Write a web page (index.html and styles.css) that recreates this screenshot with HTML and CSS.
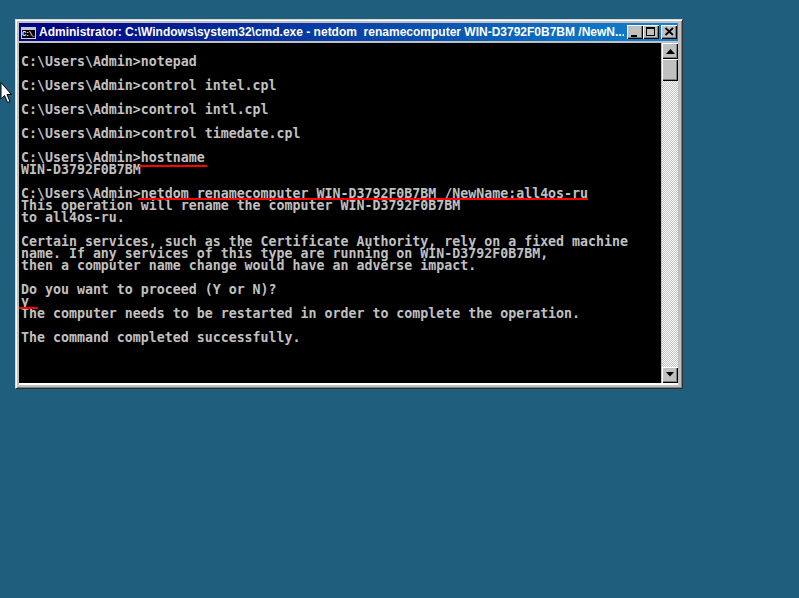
FILE: index.html
```html
<!DOCTYPE html>
<html lang="en">
<head>
<meta charset="utf-8">
<title>cmd.exe</title>
<link rel="stylesheet" href="styles.css">
</head>
<body>
<main class="desktop">
  <svg class="cursor" width="12" height="21" viewBox="0 0 12 21"><path d="M1 0.5V17L4.5 13.5L7.5 20.5L10 19.500L7 12.500H11.500Z" fill="#fff" stroke="#000"/></svg>
  <section class="window">
    <header class="titlebar">
      <div class="appicon"><span class="appicon-text">C:\_</span></div>
      <div class="title">Administrator: C:\Windows\system32\cmd.exe - netdom&nbsp; renamecomputer WIN-D3792F0B7BM /NewN...</div>
      <div class="controls">
        <button class="ctl"><svg width="16" height="14" viewBox="0 0 16 14"><rect x="4" y="10" width="6" height="2" fill="#000"/></svg></button>
        <button class="ctl"><svg width="16" height="14" viewBox="0 0 16 14"><path d="M3 2H12V11H3Z M4 4V10H11V4Z" fill="#000" fill-rule="evenodd"/></svg></button>
        <button class="ctl ctl-close"><svg width="16" height="14" viewBox="0 0 16 14"><path d="M4.500 3L12 10M12 3L4.500 10" stroke="#000" stroke-width="1.800"/></svg></button>
      </div>
    </header>
    <div class="client">
      <div class="console">
<pre class="output">

C:\Users\Admin&gt;notepad

C:\Users\Admin&gt;control intel.cpl

C:\Users\Admin&gt;control intl.cpl

C:\Users\Admin&gt;control timedate.cpl

C:\Users\Admin&gt;hostname
WIN-D3792F0B7BM

C:\Users\Admin&gt;netdom renamecomputer WIN-D3792F0B7BM /NewName:all4os-ru
This operation will rename the computer WIN-D3792F0B7BM
to all4os-ru.

Certain services, such as the Certificate Authority, rely on a fixed machine
name. If any services of this type are running on WIN-D3792F0B7BM,
then a computer name change would have an adverse impact.

Do you want to proceed (Y or N)?
y
The computer needs to be restarted in order to complete the operation.

The command completed successfully.
</pre>
        <div class="mark mark-host"></div>
        <div class="mark mark-netdom"></div>
        <div class="mark mark-y"></div>
      </div>
      <aside class="scrollbar">
        <div class="sbtn"><svg width="16" height="16" viewBox="0 0 16 16"><path d="M8.500 6L13 11H4Z" fill="#000"/></svg></div>
        <div class="thumb"></div>
        <div class="track"></div>
        <div class="sbtn"><svg width="16" height="16" viewBox="0 0 16 16"><path d="M4 5H12L8 9.500Z" fill="#000"/></svg></div>
      </aside>
    </div>
  </section>
</main>
</body>
</html>
```
FILE: styles.css
```css
* { box-sizing: border-box; }
html, body { margin: 0; height: 100%; }
body { background: #1f5f7d; overflow: hidden; }
.desktop { position: relative; width: 799px; height: 598px; overflow: hidden; }
.cursor { position: absolute; left: 0; top: 82px; }
.window {
  position: absolute; left: 15px; top: 19px; width: 668px; height: 370px;
  background: #c0c0c0;
  border: 1px solid; border-color: #d8d8d8 #303030 #303030 #d8d8d8;
  box-shadow: inset 1px 1px 0 #fff, inset -1px -1px 0 #808080;
  padding: 3px 4px 4px 3px;
  display: flex; flex-direction: column;
}
.titlebar {
  height: 18px; flex: none;
  background: linear-gradient(90deg, #000080, #1084d0);
  display: flex; align-items: center; padding: 0 1px 0 2px; gap: 3px;
  font: bold 12px/18px "Liberation Sans", sans-serif; color: #fff;
}
.appicon {
  width: 15px; height: 12px; margin-top: 2px; flex: none; background: #000; overflow: hidden;
  border: 1px solid #d0d0d0; border-top: 3px solid #c8c8d8;
}
.appicon-text { display: block; font: bold 7px/8px "Liberation Mono", monospace; color: #fff; letter-spacing: -.8px; }
.title { flex: 1; min-width: 0; white-space: nowrap; overflow: hidden; }
.controls { display: flex; flex: none; }
.ctl {
  width: 16px; height: 14px; padding: 0; display: block;
  background: #c0c0c0; border: 0;
  box-shadow: inset 1px 1px 0 #fff, inset -1px -1px 0 #000, inset -2px -2px 0 #808080;
}
.ctl svg { display: block; }
.ctl-close { margin-left: 2px; }
.client {
  flex: 1; min-height: 0; margin-top: 2px; display: flex;
  border-bottom: 1px solid #fff; box-shadow: 0 1px 0 #fff;
}
.console { position: relative; flex: 1; min-width: 0; background: #000; overflow: hidden; margin-right: 1px; }
.output {
  margin: 0; padding: 1px 0 0 2px;
  font: bold 13.280px/12px "DejaVu Sans Mono", monospace; color: #c0c0c0;
}
.mark { position: absolute; height: 2px; background: #f00; }
.mark-host { left: 120px; top: 122px; width: 68px; }
.mark-netdom { left: 119px; top: 155px; width: 450px; }
.mark-y { left: 0; top: 264px; width: 19px; }
.scrollbar { width: 16px; flex: none; display: flex; flex-direction: column; }
.sbtn, .thumb {
  background: #c0c0c0; flex: none;
  box-shadow: inset 1px 1px 0 #fff, inset -1px -1px 0 #000, inset -2px -2px 0 #808080;
}
.sbtn { height: 16px; }
.sbtn svg { display: block; }
.thumb { height: 22px; }
.track { flex: 1; background: repeating-conic-gradient(#fff 0 25%, #c0c0c0 0 50%) 0 0 / 2px 2px; }
```
